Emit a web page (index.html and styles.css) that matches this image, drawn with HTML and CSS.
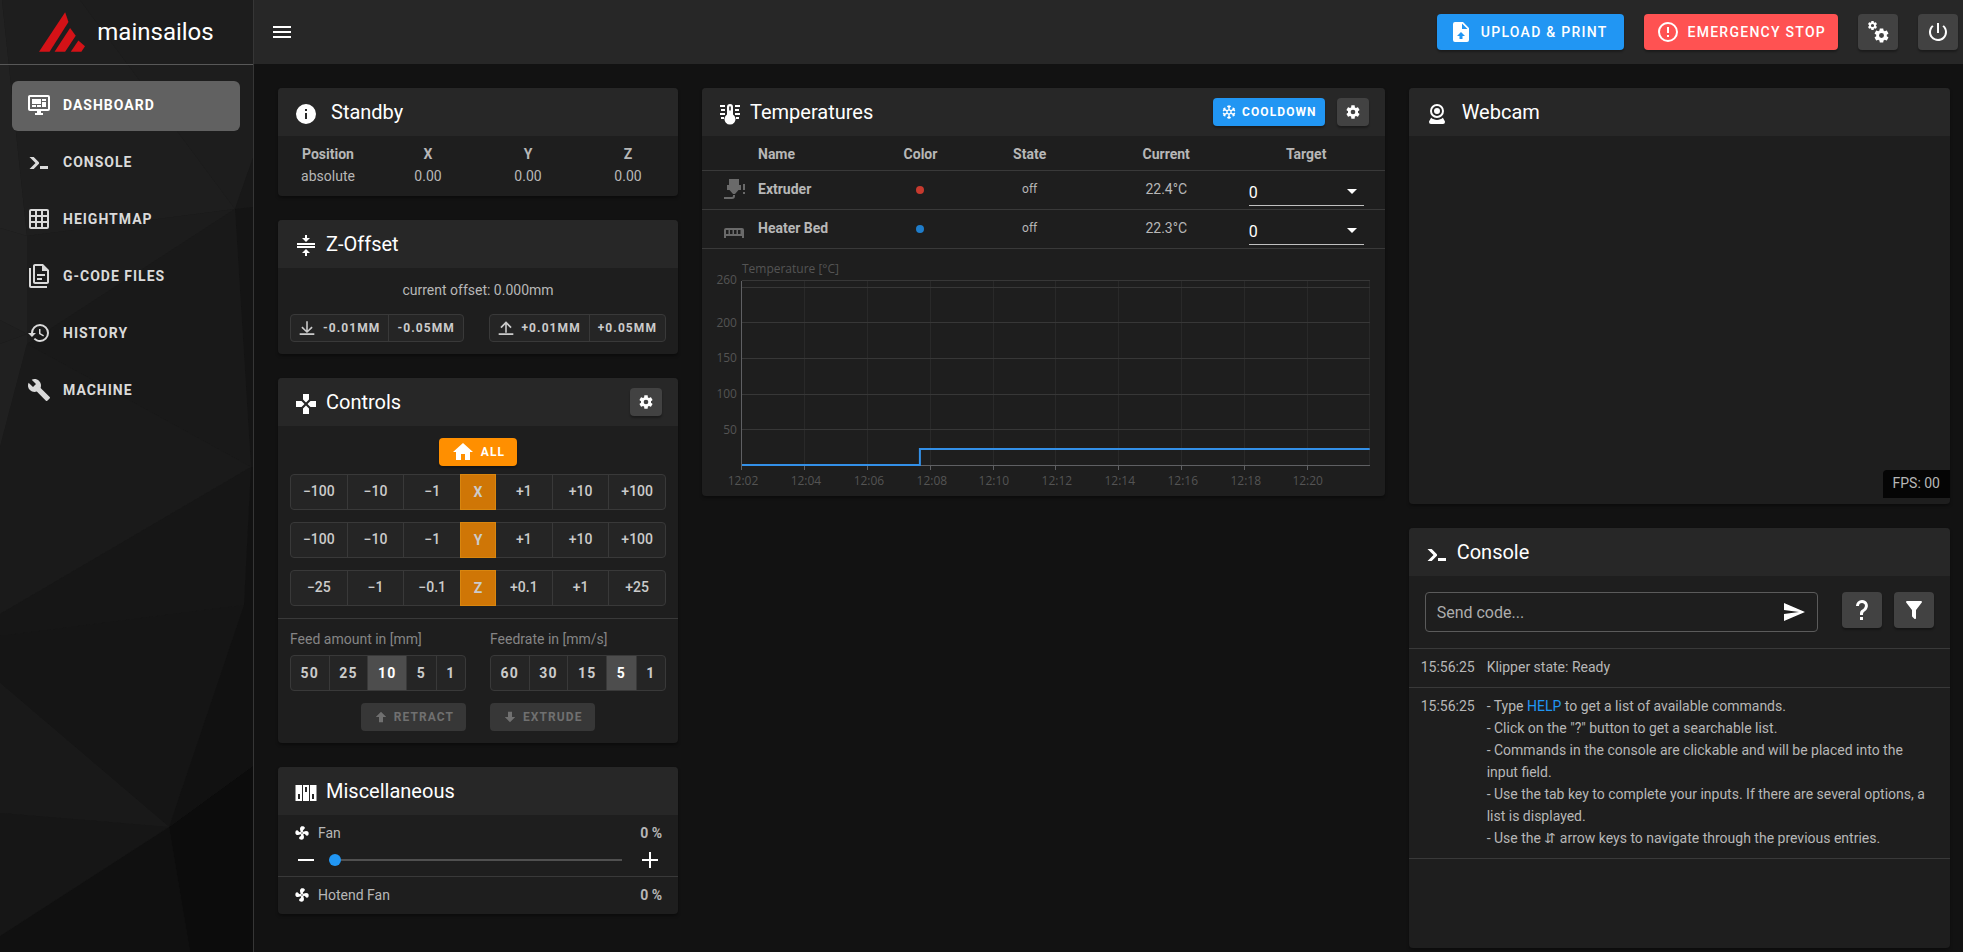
FILE: index.html
```html
<!DOCTYPE html>
<html lang="en">
<head>
    <meta charset="UTF-8">
    <meta name="viewport" content="width=device-width, initial-scale=1">
    <title>mainsailos</title>
    <link rel="stylesheet" href="styles.css">
</head>
<body>
    <!-- Icon set -->
    <svg class="icon-set" aria-hidden="true">
        <symbol id="i-menu" viewBox="0 0 24 24"><path d="M3,6H21V8H3V6M3,11H21V13H3V11M3,16H21V18H3V16Z"/></symbol>
        <symbol id="i-upload" viewBox="0 0 24 24"><path d="M14,2H6A2,2 0 0,0 4,4V20A2,2 0 0,0 6,22H18A2,2 0 0,0 20,20V8L14,2M13.5,16V19H10.5V16H8L12,12L16,16H13.5M13,9V3.5L18.5,9H13Z"/></symbol>
        <symbol id="i-alert" viewBox="0 0 24 24"><path d="M11,15H13V17H11V15M11,7H13V13H11V7M12,2C6.47,2 2,6.5 2,12A10,10 0 0,0 12,22A10,10 0 0,0 22,12A10,10 0 0,0 12,2M12,20A8,8 0 0,1 4,12A8,8 0 0,1 12,4A8,8 0 0,1 20,12A8,8 0 0,1 12,20Z"/></symbol>
        <symbol id="i-cog" viewBox="0 0 24 24"><path d="M12,15.5A3.5,3.5 0 0,1 8.5,12A3.5,3.5 0 0,1 12,8.5A3.5,3.5 0 0,1 15.5,12A3.5,3.5 0 0,1 12,15.5M19.43,12.97C19.47,12.65 19.5,12.33 19.5,12C19.5,11.67 19.47,11.34 19.43,11L21.54,9.37C21.73,9.22 21.78,8.95 21.66,8.73L19.66,5.27C19.54,5.05 19.27,4.96 19.05,5.05L16.56,6.05C16.04,5.66 15.5,5.32 14.87,5.07L14.5,2.42C14.46,2.18 14.25,2 14,2H10C9.75,2 9.54,2.18 9.5,2.42L9.13,5.07C8.5,5.32 7.96,5.66 7.44,6.05L4.95,5.05C4.73,4.96 4.46,5.05 4.34,5.27L2.34,8.73C2.21,8.95 2.27,9.22 2.46,9.37L4.57,11C4.53,11.34 4.5,11.67 4.5,12C4.5,12.33 4.53,12.65 4.57,12.97L2.46,14.63C2.27,14.78 2.21,15.05 2.34,15.27L4.34,18.73C4.46,18.95 4.73,19.03 4.95,18.95L7.44,17.94C7.96,18.34 8.5,18.68 9.13,18.93L9.5,21.58C9.54,21.82 9.75,22 10,22H14C14.25,22 14.46,21.82 14.5,21.58L14.87,18.93C15.5,18.67 16.04,18.34 16.56,17.94L19.05,18.95C19.27,19.03 19.54,18.95 19.66,18.73L21.66,15.27C21.78,15.05 21.73,14.78 21.54,14.63L19.43,12.97Z"/></symbol>
        <symbol id="i-cogs" viewBox="0 0 24 24"><use href="#i-cog" x="1" y="0" width="11" height="11"/><use href="#i-cog" x="7" y="7" width="17" height="17"/></symbol>
        <symbol id="i-power" viewBox="0 0 24 24"><path d="M13,3H11V13H13V3M17.83,5.17L16.41,6.59C18.05,7.91 19,9.9 19,12A7,7 0 0,1 12,19C8.14,19 5,15.88 5,12C5,9.91 5.95,7.91 7.58,6.58L6.17,5.17C2.38,8.39 1.92,14.07 5.14,17.86C8.36,21.64 14.04,22.1 17.83,18.88C19.85,17.17 21,14.65 21,12C21,9.37 19.84,6.87 17.83,5.17Z"/></symbol>
        <symbol id="i-dashboard" viewBox="0 0 24 24"><path d="M21,16V4H3V16H21M21,2A2,2 0 0,1 23,4V16A2,2 0 0,1 21,18H14V20H16V22H8V20H10V18H3C1.89,18 1,17.1 1,16V4C1,2.89 1.89,2 3,2H21M5,6H14V11H5V6M15,6H19V8H15V6M19,9V14H15V9H19M5,12H9V14H5V12M10,12H14V14H10V12Z"/></symbol>
        <symbol id="i-console" viewBox="0 0 24 24"><path d="M13,19V16H21V19H13M8.5,13L2.47,7H6.71L11.67,11.95C12.25,12.54 12.25,13.5 11.67,14.07L6.74,19H2.5L8.5,13Z"/></symbol>
        <symbol id="i-grid" viewBox="0 0 24 24"><path d="M10,4V8H14V4H10M16,4V8H20V4H16M16,10V14H20V10H16M16,16V20H20V16H16M14,20V16H10V20H14M8,20V16H4V20H8M8,14V10H4V14H8M8,8V4H4V8H8M10,14H14V10H10V14M4,2H20A2,2 0 0,1 22,4V20A2,2 0 0,1 20,22H4C2.92,22 2,21.1 2,20V4A2,2 0 0,1 4,2Z" fill-rule="evenodd"/></symbol>
        <symbol id="i-files" viewBox="0 0 24 24"><path fill-rule="evenodd" d="M16,0H8C6.9,0 6,.9 6,2V18C6,19.1 6.9,20 8,20H20C21.1,20 22,19.1 22,18V6L16,0M20,18H8V2H15V7H20V18M4,4V22H20V24H4C2.9,24 2,23.1 2,22V4H4M10,10V12H18V10H10M10,14V16H15V14H10Z"/></symbol>
        <symbol id="i-history" viewBox="0 0 24 24"><path d="M13.5,8H12V13L16.28,15.54L17,14.33L13.5,12.25V8M13,3A9,9 0 0,0 4,12H1L4.96,16.03L9,12H6A7,7 0 0,1 13,5A7,7 0 0,1 20,12A7,7 0 0,1 13,19C11.07,19 9.32,18.21 8.06,16.94L6.64,18.36C8.27,20 10.5,21 13,21A9,9 0 0,0 22,12A9,9 0 0,0 13,3"/></symbol>
        <symbol id="i-wrench" viewBox="0 0 24 24"><path d="M22.7,19L13.6,9.9C14.5,7.6 14,4.9 12.1,3C10.1,1 7.1,0.6 4.7,1.7L9,6L6,9L1.6,4.7C0.4,7.1 0.9,10.1 2.9,12.1C4.8,14 7.5,14.5 9.8,13.6L18.9,22.7C19.3,23.1 19.9,23.1 20.3,22.7L22.6,20.4C23.1,20 23.1,19.3 22.7,19Z"/></symbol>
        <symbol id="i-info" viewBox="0 0 24 24"><path d="M13,9H11V7H13M13,17H11V11H13M12,2A10,10 0 0,0 2,12A10,10 0 0,0 12,22A10,10 0 0,0 22,12A10,10 0 0,0 12,2Z"/></symbol>
        <symbol id="i-zoffset" viewBox="0 0 24 24"><path d="M3,12H21V14H3V12M3,9H21V11H3V9M16,4L12,8L8,4H11V1H13V4H16M8,19L12,15L16,19H13V22H11V19H8Z"/></symbol>
        <symbol id="i-gamepad" viewBox="0 0 24 24"><path d="M16.5,9L13.5,12L16.5,15H22V9M9,16.5V22H15V16.5L12,13.5M7.5,9H2V15H7.5L10.5,12M15,7.5V2H9V7.5L12,10.5L15,7.5Z"/></symbol>
        <symbol id="i-home" viewBox="0 0 24 24"><path d="M10,20V14H14V20H19V12H22L12,3L2,12H5V20H10Z"/></symbol>
        <symbol id="i-down-line" viewBox="0 0 24 24"><path d="M20.500,11.500L12,19.500L3.500,11.500L5.300,9.800L10.800,15.200V2H13.200V15.200L18.700,9.800ZM1,20H23V22.500H1Z"/></symbol>
        <symbol id="i-up-line" viewBox="0 0 24 24"><path d="M3.500,10.500L12,2L20.500,10.500L18.700,12.200L13.200,6.700V19H10.800V6.700L5.300,12.200ZM1,20H23V22.500H1Z"/></symbol>
        <symbol id="i-up" viewBox="0 0 24 24"><path d="M15,20H9V12H4.16L12,4.16L19.84,12H15V20Z"/></symbol>
        <symbol id="i-down" viewBox="0 0 24 24"><path d="M9,4H15V12H19.84L12,19.84L4.16,12H9V4Z"/></symbol>
        <symbol id="i-switch" viewBox="0 0 24 24"><path fill-rule="evenodd" d="M1.500,4H8V20H1.500ZM4,13V18H6V13ZM9,4H15V20H9ZM11,6V11H13V6ZM16,4H22.500V20H16ZM18,13V18H20V13Z"/></symbol>
        <symbol id="i-fan" viewBox="0 0 24 24"><path d="M12,11A1,1 0 0,0 11,12A1,1 0 0,0 12,13A1,1 0 0,0 13,12A1,1 0 0,0 12,11M12.5,2C17,2 17.11,5.57 14.75,6.75C13.76,7.24 13.32,8.29 13.13,9.22C13.61,9.42 14.03,9.73 14.35,10.13C18.05,8.13 22.03,8.92 22.03,12.5C22.03,17 18.46,17.1 17.28,14.73C16.78,13.74 15.72,13.3 14.79,13.11C14.59,13.59 14.28,14 13.88,14.34C15.87,18.03 15.08,22 11.5,22C7,22 6.91,18.42 9.27,17.24C10.25,16.75 10.69,15.71 10.89,14.79C10.4,14.59 9.97,14.27 9.65,13.87C5.96,15.85 2,15.07 2,11.5C2,7 5.56,6.89 6.74,9.26C7.24,10.25 8.29,10.68 9.22,10.87C9.41,10.39 9.73,9.97 10.14,9.65C8.15,5.96 8.94,2 12.5,2Z"/></symbol>
        <symbol id="i-minus" viewBox="0 0 24 24"><path d="M4,11H20V13H4Z"/></symbol>
        <symbol id="i-plus" viewBox="0 0 24 24"><path d="M4,11H11V4H13V11H20V13H13V20H11V13H4Z"/></symbol>
        <symbol id="i-thermo" viewBox="0 0 24 24"><path fill-rule="evenodd" d="M9,12.500V5A3,3 0 0,1 15,5V12.500A5.500,5.500 0 1,1 9,12.500M11.200,4.500V8.500H12.800V4.500ZM2,3H7V5H2ZM3,7H7V9H3ZM2,11H7V13H2ZM3,15H6V17H3ZM17,3H22V5H17ZM17,7H21V9H17ZM17,11H22V13H17ZM18,15H21V17H18Z"/></symbol>
        <symbol id="i-snow" viewBox="0 0 24 24"><path fill="none" stroke="currentColor" stroke-width="2" d="M12,8.500V2M12,15.500V22M9,10.200L3.300,7M15,13.800L20.700,17M9,13.800L3.300,17M15,10.200L20.700,7M9.500,3L12,5L14.500,3M9.500,21L12,19L14.500,21M3,10.500L6,8.500L5.500,5.500M21,13.500L18,15.500L18.500,18.500M3,13.500L6,15.500L5.500,18.500M21,10.500L18,8.500L18.500,5.500M12,8.500L15,10.200V13.800L12,15.500L9,13.800V10.200Z"/></symbol>
        <symbol id="i-nozzle" viewBox="0 0 24 24"><path d="M7,2H17V8H19V13H16.500L13,17H11L7.500,13H5V8H7V2M10,22H2V20H10A1,1 0 0,0 11,19V18H13V19A3,3 0 0,1 10,22M21,7H23V13H21ZM21,15H23V17H21Z"/></symbol>
        <symbol id="i-bed" viewBox="0 0 24 24"><path fill-rule="evenodd" d="M4,12H20A2,2 0 0,1 22,14V22H20V20H4V22H2V14A2,2 0 0,1 4,12M4,14V18H6.500V14ZM8,14V18H10.500V14ZM12,14V18H14.500V14ZM16,14V18H18.500V14Z"/></symbol>
        <symbol id="i-webcam" viewBox="0 0 24 24"><path d="M12,2A7,7 0 0,1 19,9A7,7 0 0,1 12,16A7,7 0 0,1 5,9A7,7 0 0,1 12,2M12,4A5,5 0 0,0 7,9A5,5 0 0,0 12,14A5,5 0 0,0 17,9A5,5 0 0,0 12,4M12,6A3,3 0 0,1 15,9A3,3 0 0,1 12,12A3,3 0 0,1 9,9A3,3 0 0,1 12,6M6,22A2,2 0 0,1 4,20C4,19.62 4.1,19.27 4.29,18.97L6.11,15.81C7.69,17.17 9.75,18 12,18C14.25,18 16.31,17.17 17.89,15.81L19.71,18.97C19.9,19.27 20,19.62 20,20A2,2 0 0,1 18,22H6Z"/></symbol>
        <symbol id="i-send" viewBox="0 0 24 24"><path d="M2,21L23,12L2,3V10L17,12L2,14V21Z"/></symbol>
        <symbol id="i-help" viewBox="0 0 24 24"><path d="M10,19H13V22H10V19M12,2C17.35,2.22 19.68,7.62 16.5,11.67C15.67,12.67 14.33,13.33 13.67,14.17C13,15 13,16 13,17H10C10,15.33 10,13.92 10.67,12.92C11.33,11.92 12.67,11.33 13.5,10.67C15.92,8.43 15.32,5.26 12,5A3,3 0 0,0 9,8H6A6,6 0 0,1 12,2Z"/></symbol>
        <symbol id="i-filter" viewBox="0 0 24 24"><path d="M14,12V19.88C14.04,20.18 13.94,20.5 13.71,20.71C13.32,21.1 12.69,21.1 12.3,20.71L10.29,18.7C10.06,18.47 9.96,18.16 10,17.87V12H9.97L4.21,4.62C3.87,4.19 3.95,3.56 4.38,3.22C4.57,3.08 4.78,3 5,3H19C19.22,3 19.43,3.08 19.62,3.22C20.05,3.56 20.13,4.19 19.79,4.62L14.03,12H14Z"/></symbol>
    </svg>

    <div class="app">
        <!-- Sidebar -->
        <aside class="sidebar">
            <svg class="sidebar-bg" viewBox="0 0 254 952" preserveAspectRatio="xMinYMin slice" aria-hidden="true">
                <polygon fill="#222222" points="0,0 2,0 27,236 0,228"/>
                <polygon fill="#1e1e1e" points="2,0 80,0 235,209 27,236"/>
                <polygon fill="#1d1d1d" points="80,0 254,0 254,155 235,209"/>
                <polygon fill="#181818" points="254,155 254,207 235,209"/>
                <polygon fill="#141414" points="235,209 254,207 254,467 251,467"/>
                <polygon fill="#1c1c1c" points="27,236 235,209 27,344"/>
                <polygon fill="#191919" points="27,344 235,209 251,467"/>
                <polygon fill="#212121" points="0,228 27,236 27,334 0,320"/>
                <polygon fill="#1f1f1f" points="0,320 27,334 0,344"/>
                <polygon fill="#202020" points="0,344 27,334 27,344 0,447"/>
                <polygon fill="#1a1a1a" points="27,344 251,467 0,614 0,447"/>
                <polygon fill="#161616" points="251,467 244,605 0,636 0,614"/>
                <polygon fill="#151515" points="0,636 244,605 169,827 0,683"/>
                <polygon fill="#191919" points="0,683 169,827 0,813"/>
                <polygon fill="#161616" points="0,813 169,827 0,936"/>
                <polygon fill="#101010" points="169,827 190,952 0,952 0,936"/>
                <polygon fill="#0c0c0c" points="169,827 254,765 254,952 190,952"/>
                <polygon fill="#111111" points="251,467 254,467 254,765 169,827 244,605"/>
            </svg>
            <div class="brand">
                <svg class="brand-logo" viewBox="117 36 139 120" aria-hidden="true">
                    <polygon points="117,156 196,36 206,66 149,156"/>
                    <polygon points="164,156 211,84 228,107 196,156"/>
                    <polygon points="213,156 236,122 256,139 245,156"/>
                </svg>
                <span class="brand-name">mainsailos</span>
            </div>
            <nav class="nav">
                <a href="#" class="nav-item active"><svg class="icon"><use href="#i-dashboard"/></svg>Dashboard</a>
                <a href="#" class="nav-item"><svg class="icon"><use href="#i-console"/></svg>Console</a>
                <a href="#" class="nav-item"><svg class="icon"><use href="#i-grid"/></svg>Heightmap</a>
                <a href="#" class="nav-item"><svg class="icon"><use href="#i-files"/></svg>G-Code Files</a>
                <a href="#" class="nav-item"><svg class="icon"><use href="#i-history"/></svg>History</a>
                <a href="#" class="nav-item"><svg class="icon"><use href="#i-wrench"/></svg>Machine</a>
            </nav>
        </aside>

        <div class="content">
            <!-- Top bar -->
            <header class="topbar">
                <button type="button" class="menu-btn" aria-label="Menu"><svg class="icon"><use href="#i-menu"/></svg></button>
                <button type="button" class="btn btn-primary"><svg class="icon"><use href="#i-upload"/></svg>Upload &amp; Print</button>
                <button type="button" class="btn btn-danger"><svg class="icon"><use href="#i-alert"/></svg>Emergency Stop</button>
                <button type="button" class="btn btn-square" aria-label="Interface settings"><svg class="icon"><use href="#i-cogs"/></svg></button>
                <button type="button" class="btn btn-square" aria-label="Power"><svg class="icon"><use href="#i-power"/></svg></button>
            </header>

            <main class="dashboard">
                <div class="column">
                    <!-- Status -->
                    <section class="card">
                        <div class="card-header wide"><svg class="icon"><use href="#i-info"/></svg><h2>Standby</h2></div>
                        <table class="position">
                            <thead>
                                <tr><th>Position</th><th>X</th><th>Y</th><th>Z</th></tr>
                            </thead>
                            <tbody>
                                <tr><td>absolute</td><td>0.00</td><td>0.00</td><td>0.00</td></tr>
                            </tbody>
                        </table>
                    </section>

                    <!-- Z-Offset -->
                    <section class="card">
                        <div class="card-header"><svg class="icon"><use href="#i-zoffset"/></svg><h2>Z-Offset</h2></div>
                        <div class="zoffset">
                            <p>current offset: 0.000mm</p>
                            <div class="zoffset-buttons">
                                <div class="group small">
                                    <button type="button"><svg class="icon"><use href="#i-down-line"/></svg>-0.01mm</button>
                                    <button type="button">-0.05mm</button>
                                </div>
                                <div class="group small">
                                    <button type="button"><svg class="icon"><use href="#i-up-line"/></svg>+0.01mm</button>
                                    <button type="button">+0.05mm</button>
                                </div>
                            </div>
                        </div>
                    </section>

                    <!-- Controls -->
                    <section class="card">
                        <div class="card-header">
                            <svg class="icon"><use href="#i-gamepad"/></svg><h2>Controls</h2>
                            <button type="button" class="btn btn-small btn-cog" aria-label="Control settings"><svg class="icon"><use href="#i-cog"/></svg></button>
                        </div>
                        <div class="moves">
                            <button type="button" class="btn btn-small btn-home"><svg class="icon"><use href="#i-home"/></svg>All</button>
                            <div class="group axis">
                                <button type="button">−100</button><button type="button">−10</button><button type="button">−1</button>
                                <button type="button" class="axis-name">X</button>
                                <button type="button">+1</button><button type="button">+10</button><button type="button">+100</button>
                            </div>
                            <div class="group axis">
                                <button type="button">−100</button><button type="button">−10</button><button type="button">−1</button>
                                <button type="button" class="axis-name">Y</button>
                                <button type="button">+1</button><button type="button">+10</button><button type="button">+100</button>
                            </div>
                            <div class="group axis">
                                <button type="button">−25</button><button type="button">−1</button><button type="button">−0.1</button>
                                <button type="button" class="axis-name">Z</button>
                                <button type="button">+0.1</button><button type="button">+1</button><button type="button">+25</button>
                            </div>
                        </div>
                        <div class="extrusion">
                            <div class="feed">
                                <span class="feed-label">Feed amount in [mm]</span>
                                <div class="group feed-group">
                                    <button type="button">50</button><button type="button">25</button><button type="button" class="selected">10</button><button type="button">5</button><button type="button">1</button>
                                </div>
                                <button type="button" class="btn btn-small btn-feed retract" disabled><svg class="icon"><use href="#i-up"/></svg>Retract</button>
                            </div>
                            <div class="feed">
                                <span class="feed-label">Feedrate in [mm/s]</span>
                                <div class="group feed-group">
                                    <button type="button">60</button><button type="button">30</button><button type="button">15</button><button type="button" class="selected">5</button><button type="button">1</button>
                                </div>
                                <button type="button" class="btn btn-small btn-feed" disabled><svg class="icon"><use href="#i-down"/></svg>Extrude</button>
                            </div>
                        </div>
                    </section>

                    <!-- Miscellaneous -->
                    <section class="card">
                        <div class="card-header"><svg class="icon"><use href="#i-switch"/></svg><h2>Miscellaneous</h2></div>
                        <div class="misc-item">
                            <div class="misc-row"><svg class="icon"><use href="#i-fan"/></svg><label for="fan">Fan</label><strong>0 %</strong></div>
                            <div class="misc-slider">
                                <button type="button" class="step" aria-label="Decrease"><svg class="icon"><use href="#i-minus"/></svg></button>
                                <input type="range" id="fan" min="0" max="100" value="0">
                                <button type="button" class="step" aria-label="Increase"><svg class="icon"><use href="#i-plus"/></svg></button>
                            </div>
                        </div>
                        <div class="misc-item">
                            <div class="misc-row"><svg class="icon"><use href="#i-fan"/></svg><span>Hotend Fan</span><strong>0 %</strong></div>
                        </div>
                    </section>
                </div>

                <div class="column">
                    <!-- Temperatures -->
                    <section class="card">
                        <div class="card-header">
                            <svg class="icon"><use href="#i-thermo"/></svg><h2>Temperatures</h2>
                            <button type="button" class="btn btn-small btn-primary btn-cool"><svg class="icon"><use href="#i-snow"/></svg>Cooldown</button>
                            <button type="button" class="btn btn-small btn-cog" aria-label="Temperature settings"><svg class="icon"><use href="#i-cog"/></svg></button>
                        </div>
                        <table class="temps">
                            <thead>
                                <tr>
                                    <th class="col-icon"></th><th class="col-name">Name</th><th class="col-color">Color</th>
                                    <th class="col-state">State</th><th class="col-current">Current</th><th class="col-target">Target</th>
                                </tr>
                            </thead>
                            <tbody>
                                <tr>
                                    <td class="col-icon"><svg class="icon"><use href="#i-nozzle"/></svg></td>
                                    <td class="col-name">Extruder</td>
                                    <td><span class="dot red"></span></td>
                                    <td class="state">off</td>
                                    <td>22.4°C</td>
                                    <td><div class="target"><select aria-label="Extruder target"><option>0</option></select></div></td>
                                </tr>
                                <tr>
                                    <td class="col-icon"><svg class="icon"><use href="#i-bed"/></svg></td>
                                    <td class="col-name">Heater Bed</td>
                                    <td><span class="dot blue"></span></td>
                                    <td class="state">off</td>
                                    <td>22.3°C</td>
                                    <td><div class="target"><select aria-label="Heater Bed target"><option>0</option></select></div></td>
                                </tr>
                            </tbody>
                        </table>
                        <svg class="chart" viewBox="0 -1 683 247">
                            <g class="grid-x">
                                <path d="M103,31V216M166,31V216M229,31V216M292,31V216M354,31V216M417,31V216M480,31V216M543,31V216M606,31V216M668,31V216"/>
                            </g>
                            <g class="grid-y">
                                <path d="M40,31H668M40,38H668M40,73H668M40,109H668M40,145H668M40,180H668"/>
                            </g>
                            <path class="axis-line" d="M40,31V220M40,216H668M103,216V220M166,216V220M229,216V220M292,216V220M354,216V220M417,216V220M480,216V220M543,216V220M606,216V220"/>
                            <path class="line-red" d="M219,200H668"/>
                            <path class="line-blue" d="M40,215H218V199H668"/>
                            <text x="40" y="23">Temperature [°C]</text>
                            <g class="labels-y">
                                <text x="35" y="34">260</text>
                                <text x="35" y="77">200</text>
                                <text x="35" y="112">150</text>
                                <text x="35" y="148">100</text>
                                <text x="35" y="184">50</text>
                            </g>
                            <g class="labels-x">
                                <text x="41" y="235">12:02</text>
                                <text x="104" y="235">12:04</text>
                                <text x="167" y="235">12:06</text>
                                <text x="230" y="235">12:08</text>
                                <text x="292" y="235">12:10</text>
                                <text x="355" y="235">12:12</text>
                                <text x="418" y="235">12:14</text>
                                <text x="481" y="235">12:16</text>
                                <text x="544" y="235">12:18</text>
                                <text x="606" y="235">12:20</text>
                            </g>
                        </svg>
                    </section>
                </div>

                <div class="column">
                    <!-- Webcam -->
                    <section class="card">
                        <div class="card-header wide"><svg class="icon"><use href="#i-webcam"/></svg><h2>Webcam</h2></div>
                        <div class="webcam"><span class="fps">FPS: 00</span></div>
                    </section>

                    <!-- Console -->
                    <section class="card card-fill">
                        <div class="card-header"><svg class="icon"><use href="#i-console"/></svg><h2>Console</h2></div>
                        <form class="console-form">
                            <div class="console-input">
                                <input type="text" placeholder="Send code..." aria-label="Send code" autocomplete="off">
                                <button type="submit" class="step" aria-label="Send"><svg class="icon"><use href="#i-send"/></svg></button>
                            </div>
                            <button type="button" class="btn btn-square" aria-label="Command list"><svg class="icon"><use href="#i-help"/></svg></button>
                            <button type="button" class="btn btn-square" aria-label="Filter"><svg class="icon"><use href="#i-filter"/></svg></button>
                        </form>
                        <div class="log">
                            <div class="log-entry">
                                <time>15:56:25</time>
                                <div>Klipper state: Ready</div>
                            </div>
                            <div class="log-entry">
                                <time>15:56:25</time>
                                <div>
                                    - Type <a href="#">HELP</a> to get a list of available commands.<br>
                                    - Click on the "?" button to get a searchable list.<br>
                                    - Commands in the console are clickable and will be placed into the input field.<br>
                                    - Use the tab key to complete your inputs. If there are several options, a list is displayed.<br>
                                    - Use the ⇵ arrow keys to navigate through the previous entries.
                                </div>
                            </div>
                        </div>
                    </section>
                </div>
            </main>
        </div>
    </div>
</body>
</html>
```
FILE: styles.css
```css
* {
    box-sizing: border-box;
}

body {
    margin: 0;
    background-color: #121212;
    color: #b7b7b7;
    font-family: Roboto, sans-serif;
    font-size: 14px;
    line-height: 22px;
}

button,
input,
select {
    font-family: inherit;
    color: inherit;
    margin: 0;
}

button {
    display: inline-flex;
    align-items: center;
    justify-content: center;
    border: none;
    background: none;
    padding: 0;
    cursor: pointer;
}

.icon-set {
    display: none;
}

.icon {
    width: 24px;
    height: 24px;
    flex: none;
    fill: currentColor;
}

.app {
    display: flex;
    min-height: 100vh;
}

/* Sidebar */
.sidebar {
    position: relative;
    width: 254px;
    flex: none;
    border-right: 1px solid #363636;
    background-color: #1a1a1a;
}

.sidebar-bg {
    position: absolute;
    top: 0;
    left: 0;
    width: 100%;
    height: 100%;
}

.brand {
    position: relative;
    display: flex;
    align-items: center;
    justify-content: center;
    gap: 12px;
    height: 65px;
    border-bottom: 1px solid #585858;
}

.brand-logo {
    width: 46px;
    height: 40px;
    fill: #d41217;
}

.brand-name {
    color: #fff;
    font-size: 24px;
}

.nav {
    position: relative;
    display: flex;
    flex-direction: column;
    gap: 7px;
    padding: 16px 13px 16px 12px;
}

.nav-item {
    display: flex;
    align-items: center;
    gap: 12px;
    height: 50px;
    padding: 0 15px 2px;
    border-radius: 6px;
    color: #dadada;
    font-weight: 700;
    letter-spacing: 1px;
    text-transform: uppercase;
    text-decoration: none;
}

.nav-item.active {
    background-color: #616161;
    color: #fff;
}

/* Top bar */
.content {
    flex: 1;
    min-width: 0;
    display: flex;
    flex-direction: column;
}

.topbar {
    display: flex;
    align-items: center;
    gap: 20px;
    height: 64px;
    padding: 0 5px 0 16px;
    background-color: #272727;
}

.menu-btn {
    margin-right: auto;
    color: #fff;
}

/* Buttons */
.btn {
    height: 36px;
    gap: 8px;
    padding: 0 16px 0 12px;
    border-radius: 4px;
    background-color: #424242;
    color: #fff;
    font-size: 14px;
    font-weight: 500;
    letter-spacing: 0.09em;
    text-transform: uppercase;
    box-shadow: 0 2px 2px rgba(0, 0, 0, 0.3);
}

.btn-primary {
    background-color: #2196f3;
}

.btn-danger {
    padding: 0 12px;
    background-color: #ff5252;
}

.btn-square {
    width: 40px;
    padding: 0;
}

.btn-small {
    height: 28px;
    font-size: 12px;
    font-weight: 700;
}

.btn-cog {
    width: 32px;
    padding: 0;
}

.btn-cog .icon,
.btn-cool .icon {
    width: 16px;
    height: 16px;
}

.btn-cool {
    gap: 5px;
    padding: 0 8px;
}

/* Dashboard columns */
.dashboard {
    flex: 1;
    display: grid;
    grid-template-columns: 3fr 5fr 4fr;
    padding: 24px 1px 4px 12px;
}

.column {
    min-width: 0;
    display: flex;
    flex-direction: column;
    gap: 24px;
    padding: 0 12px;
}

.card {
    border-radius: 4px;
    background-color: #1e1e1e;
    box-shadow: 0 2px 3px rgba(0, 0, 0, 0.35);
    overflow: hidden;
}

.card-fill {
    flex: 1;
}

.card-header {
    display: flex;
    align-items: center;
    gap: 8px;
    height: 48px;
    padding: 0 16px;
    background-color: #272727;
    color: #fff;
}

.card-header.wide {
    gap: 13px;
}

.card-header > .icon {
    margin-top: 4px;
}

.card-header h2 {
    flex: 1;
    margin: 0;
    font-size: 20px;
    font-weight: 400;
}

.card-header .btn-cool {
    margin-right: 4px;
}

/* Status */
.position {
    width: 100%;
    table-layout: fixed;
    border-spacing: 0;
    padding: 7px 0 9px;
    text-align: center;
}

.position th,
.position td {
    padding: 0;
}

/* Button groups */
.group {
    display: flex;
    height: 36px;
    border: 1px solid #393939;
    border-radius: 4px;
    background-color: #252525;
}

.group button {
    border-left: 1px solid #393939;
    color: #cbcbcb;
    font-size: 14px;
    font-weight: 500;
}

.group button:first-child {
    border-left: none;
}

.group.small {
    height: 28px;
}

.group.small button {
    gap: 8px;
    padding: 0 8px;
    font-size: 12px;
    font-weight: 700;
    letter-spacing: 0.09em;
    text-transform: uppercase;
}

.group.small .icon {
    width: 16px;
    height: 16px;
}

.zoffset {
    padding: 11px 12px 12px;
}

.zoffset p {
    margin: 0 0 13px;
    text-align: center;
}

.zoffset-buttons {
    display: flex;
    justify-content: space-between;
}

/* Controls */
.moves {
    display: flex;
    flex-direction: column;
    gap: 12px;
    padding: 12px;
    border-bottom: 1px solid #393939;
}

.btn-home {
    align-self: center;
    gap: 6px;
    margin-bottom: -4px;
    padding: 0 12px;
    background-color: #ff8f00;
}

.axis button {
    flex: 1;
    padding-bottom: 2px;
}

.axis .axis-name {
    flex: 0 0 36px;
    margin: -1px 0;
    padding: 0;
    border: 1px solid #d9860f;
    background-color: #cf7606;
    font-weight: 700;
}

.axis .axis-name + button {
    border-left: none;
}

.extrusion {
    display: grid;
    grid-template-columns: 1fr 1fr;
    gap: 24px;
    padding: 8px 12px 12px;
}

.feed {
    display: flex;
    flex-direction: column;
    align-items: flex-start;
}

.feed-label {
    margin: 1px 0 5px;
    color: #858585;
}

.feed-group {
    align-self: stretch;
    margin-bottom: 12px;
}

.feed-group button {
    flex: 1 1 auto;
    font-weight: 700;
    letter-spacing: 0.09em;
}

.feed-group .selected {
    background-color: #4d4d4d;
    color: #fff;
}

.btn-feed {
    gap: 5px;
    padding: 0 12px;
    background-color: #373737;
    color: #707070;
    box-shadow: none;
}

.btn-feed .icon {
    width: 16px;
    height: 16px;
}

.retract {
    align-self: flex-end;
}

/* Miscellaneous */
.misc-item {
    padding: 7px 16px 4px;
}

.misc-item + .misc-item {
    border-top: 1px solid #393939;
    padding-bottom: 8px;
}

.misc-row {
    display: flex;
    align-items: center;
    gap: 8px;
}

.misc-row .icon {
    width: 16px;
    height: 16px;
    color: #fff;
}

.misc-row strong {
    margin-left: auto;
}

.misc-slider {
    display: flex;
    align-items: center;
    gap: 16px;
    height: 24px;
    margin-top: 4px;
}

.step {
    color: #fff;
}

.misc-slider input {
    flex: 1;
    min-width: 0;
    height: 24px;
    margin: 0 0 0 -5px;
    background: none;
    appearance: none;
}

.misc-slider input::-webkit-slider-runnable-track {
    height: 2px;
    background-color: #505050;
}

.misc-slider input::-webkit-slider-thumb {
    appearance: none;
    width: 12px;
    height: 12px;
    margin-top: -5px;
    border-radius: 50%;
    background-color: #2196f3;
}

/* Temperatures */
.temps {
    width: 100%;
    table-layout: fixed;
    border-spacing: 0;
    text-align: center;
}

.temps th,
.temps td {
    height: 39px;
    padding: 0 0 3px;
    border-bottom: 1px solid #393939;
}

.temps th {
    height: 35px;
    padding: 2px 0 0;
}

.temps .col-icon {
    width: 56px;
    padding-right: 12px;
    text-align: right;
    color: #6a6a6a;
}

.temps .icon {
    display: inline-block;
    vertical-align: middle;
}

.temps .col-name {
    text-align: left;
    font-weight: 700;
}

.temps .col-color {
    width: 10%;
}

.temps .col-state {
    width: 22%;
}

.temps .col-current {
    width: 18%;
}

.temps .col-target {
    width: 23%;
}

.temps .state {
    font-size: 12px;
}

.dot {
    display: inline-block;
    width: 8px;
    height: 8px;
    border-radius: 50%;
}

.dot.red {
    background-color: #c73a2e;
}

.dot.blue {
    background-color: #1f7dcb;
}

.target {
    position: relative;
    width: 115px;
    margin: 3px auto 0;
}

.target::after {
    content: "";
    position: absolute;
    top: 15px;
    right: 7px;
    border: 5px solid transparent;
    border-top-color: #fff;
    border-bottom: none;
    pointer-events: none;
}

.target select {
    display: block;
    width: 100%;
    height: 32px;
    padding: 5px 0 0;
    border: none;
    border-bottom: 1px solid #c0c0c0;
    border-radius: 0;
    background: none;
    color: #fff;
    font-size: 16px;
    appearance: none;
}

.chart {
    display: block;
    width: 100%;
    height: auto;
}

.chart path {
    fill: none;
    stroke-width: 1;
    shape-rendering: crispEdges;
}

.chart text {
    fill: #545454;
    font-family: "Open Sans", sans-serif;
    font-size: 12px;
}

.grid-x path {
    stroke: #292929;
}

.grid-y path {
    stroke: #373737;
}

.chart .axis-line {
    stroke: #5f6063;
}

.chart .line-red {
    stroke: #5b3540;
}

.chart .line-blue {
    stroke: #3390e8;
    stroke-width: 2;
    shape-rendering: auto;
}

.labels-y {
    text-anchor: end;
}

.labels-x {
    text-anchor: middle;
}

/* Webcam */
.webcam {
    position: relative;
    height: 368px;
}

.fps {
    position: absolute;
    right: 0;
    bottom: 6px;
    padding: 2px 10px 4px;
    border-radius: 4px 0 0 0;
    background-color: #050505;
}

/* Console */
.console-form {
    display: flex;
    gap: 12px;
    padding: 16px;
    border-bottom: 1px solid #393939;
}

.console-input {
    display: flex;
    flex: 1;
    align-items: center;
    height: 40px;
    margin-right: 12px;
    padding: 0 11px;
    border: 1px solid #5b5b5b;
    border-radius: 4px;
}

.console-input input {
    flex: 1;
    min-width: 0;
    padding: 0;
    border: none;
    outline: none;
    background: none;
    font-size: 16px;
}

.console-input input::placeholder {
    color: #adadad;
}

.log-entry {
    display: flex;
    gap: 12px;
    padding: 7px 16px 9px 12px;
    border-bottom: 1px solid #393939;
}

.log a {
    color: #2196f3;
    text-decoration: none;
}
```
